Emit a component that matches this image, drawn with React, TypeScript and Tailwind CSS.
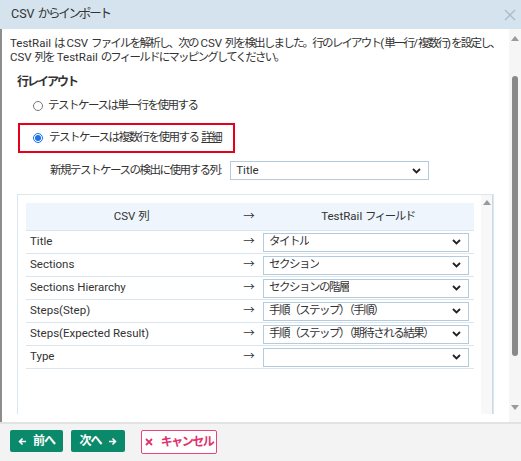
import React from 'react'

const rows: [string, string][] = [
  ['Title', 'タイトル'],
  ['Sections', 'セクション'],
  ['Sections Hierarchy', 'セクションの階層'],
  ['Steps(Step)', '手順（ステップ）（手順）'],
  ['Steps(Expected Result)', '手順（ステップ）（期待される結果）'],
  ['Type', ''],
]

// Japanese runs get a narrower setting so Noto CJK comes close to the reference face
function T({ s, c = 'text-[11.5px] tracking-[-1.5px]' }: { s: string; c?: string }) {
  const parts = s.split(/([\u3000-\u30ff\u4e00-\u9fff\uff00-\uffef]+)/)
  return (
    <>
      {parts.map((p, i) =>
        i % 2 ? (
          <span key={i} className={c}>
            {p}
          </span>
        ) : (
          <React.Fragment key={i}>{p}</React.Fragment>
        ),
      )}
    </>
  )
}

function Chevron() {
  return (
    <svg width="9" height="6" viewBox="0 0 9 6" className="shrink-0">
      <path d="M1 1l3.5 3.5L8 1" fill="none" stroke="#222" strokeWidth="1.8" />
    </svg>
  )
}

function FakeSelect({ value, className }: { value: string; className: string }) {
  return (
    <div className={`flex items-center justify-between bg-white border border-[#b3cbdc] pl-[5px] pr-[7px] text-[11.5px] text-[#333] whitespace-nowrap ${className}`}>
      <span className="truncate">
        <T s={value} />
      </span>
      <Chevron />
    </div>
  )
}

function Radio({ checked }: { checked?: boolean }) {
  return (
    <span className={`inline-flex items-center justify-center w-[10px] h-[10px] rounded-full border ${checked ? 'border-[#1a73e8]' : 'border-[#777]'} bg-white shrink-0`}>
      {checked && <span className="w-[6px] h-[6px] rounded-full bg-[#1a73e8]" />}
    </span>
  )
}

function UpArrow() {
  return (
    <svg width="8" height="5" viewBox="0 0 8 5"><path d="M0 5L4 0l4 5z" fill="#9a9a9a" /></svg>
  )
}

function DownArrow() {
  return (
    <svg width="8" height="5" viewBox="0 0 8 5"><path d="M0 0h8L4 5z" fill="#9a9a9a" /></svg>
  )
}

export default function App() {
  return (
    <div
      className="w-[521px] h-[461px] flex flex-col overflow-hidden bg-white text-[#333] text-[11.5px]"
      style={{ fontFamily: 'Roboto, "Noto Sans CJK JP", sans-serif' }}
    >
      {/* header */}
      <div className="h-[29px] shrink-0 bg-[#d4e3ed] flex items-center justify-between pl-[11px] pr-[5px]">
        <span className="text-[12.5px] text-[#333] whitespace-nowrap">
          <T s="CSV からインポート" c="text-[12.5px] tracking-[-2.2px]" />
        </span>
        <svg width="12" height="12" viewBox="0 0 12 12">
          <path d="M1 1l10 10M11 1L1 11" stroke="#a9bccb" strokeWidth="1.3" />
        </svg>
      </div>

      {/* body */}
      <div className="flex-1 flex min-h-0 border-l-2 border-[#8d8d8d]">
        <div className="flex-1 min-w-0 pl-[8px] pt-[7px]">
          <p className="leading-[14px] whitespace-nowrap">
            <T
              s="TestRail は CSV ファイルを解析し、次の CSV 列を検出しました。行のレイアウト(単一行/複数行)を設定し、"
              c="text-[11.5px] tracking-[-1.8px]"
            />
            <br />
            <T s="CSV 列を TestRail のフィールドにマッピングしてください。" c="text-[11.5px] tracking-[-1.8px]" />
          </p>

          <div className="mt-[11px] ml-[7px] font-bold leading-[15px] whitespace-nowrap">
            <T s="行レイアウト" c="text-[12px] tracking-[-2px]" />
          </div>

          <div className="mt-[8px] ml-[23px] flex items-center gap-[5px] leading-[15px] whitespace-nowrap">
            <Radio />
            <span>
              <T s="テストケースは単一行を使用する" />
            </span>
          </div>

          <div className="mt-[10px] ml-[8px] w-[217px] h-[30px] border-2 border-[#e5001c] flex items-center pl-[13px] gap-[6px] whitespace-nowrap">
            <Radio checked />
            <span>
              <T s="テストケースは複数行を使用する " />
              <span className="underline">
                <T s="詳細" />
              </span>
            </span>
          </div>

          <div className="mt-[8px] ml-[40px] flex items-center gap-[8px] whitespace-nowrap">
            <span>
              <T s="新規テストケースの検出に使用する列:" />
            </span>
            <FakeSelect value="Title" className="w-[199px] h-[19px]" />
          </div>

          {/* mapping panel */}
          <div className="mt-[14px] ml-[7px] w-[477px] h-[220px] border border-[#dbe6ef] border-b-0 flex">
            <div className="flex-1 pl-[8px] pt-[8px] pr-[7px]">
              <div className="grid grid-cols-[210px_26px_1fr] h-[28px] bg-[#eef5fc] items-center border-b border-[#dbe5ee] whitespace-nowrap">
                <span className="text-center">
                  <T s="CSV 列" />
                </span>
                <span className="text-center">→</span>
                <span className="text-center">
                  <T s="TestRail フィールド" />
                </span>
              </div>
              {rows.map(([csv, field]) => (
                <div
                  key={csv}
                  className="grid grid-cols-[210px_26px_1fr] h-[23px] items-center border-b border-[#dbe5ee]"
                >
                  <span className="pl-[4px]">{csv}</span>
                  <span className="text-center">→</span>
                  <FakeSelect value={field} className="h-[19px] mr-[5px] ml-[1px]" />
                </div>
              ))}
            </div>
            <div className="w-[12px] bg-[#f8f8f8] border-r border-[#c9dbe8] flex flex-col items-center pt-[5px]">
              <UpArrow />
            </div>
          </div>
        </div>

        {/* page scrollbar */}
        <div className="w-[12px] shrink-0 bg-[#f6f6f6] flex flex-col items-center pt-[7px] pb-[12px]">
          <UpArrow />
          <div className="mt-[35px] w-[6px] h-[280px] rounded-full bg-[#8a8a8a]" />
          <div className="flex-1" />
          <DownArrow />
        </div>
      </div>

      {/* footer */}
      <div className="h-[39px] shrink-0 bg-[#f3f3f3] border-t-2 border-[#e2e2e2] flex items-start pt-[6px] pl-[10px] font-bold whitespace-nowrap">
        <button className="w-[53px] h-[22px] bg-[#0a8a6a] text-white rounded-[2px] flex items-center justify-center gap-[6px]">
          <svg width="9" height="9" viewBox="0 0 9 9"><path d="M8 4.5H1.5M4.5 1.5l-3 3 3 3" fill="none" stroke="#fff" strokeWidth="1.6" /></svg>
          <span>
            <T s="前へ" c="text-[12px] tracking-[-1px]" />
          </span>
        </button>
        <button className="ml-[8px] w-[54px] h-[22px] bg-[#0a8a6a] text-white rounded-[2px] flex items-center justify-center gap-[6px]">
          <span>
            <T s="次へ" c="text-[12px] tracking-[-1px]" />
          </span>
          <svg width="9" height="9" viewBox="0 0 9 9"><path d="M1 4.5h6.5M4.5 1.5l3 3-3 3" fill="none" stroke="#fff" strokeWidth="1.6" /></svg>
        </button>
        <button className="ml-[16px] w-[76px] h-[24px] bg-white border border-[#e5457c] text-[#e0326e] rounded-[2px] flex items-center justify-center gap-[8px]">
          <svg width="8" height="8" viewBox="0 0 8 8"><path d="M1 1l6 6M7 1L1 7" stroke="#e0326e" strokeWidth="1.8" /></svg>
          <span>
            <T s="キャンセル" c="text-[12px] tracking-[-1.5px]" />
          </span>
        </button>
      </div>
    </div>
  )
}
